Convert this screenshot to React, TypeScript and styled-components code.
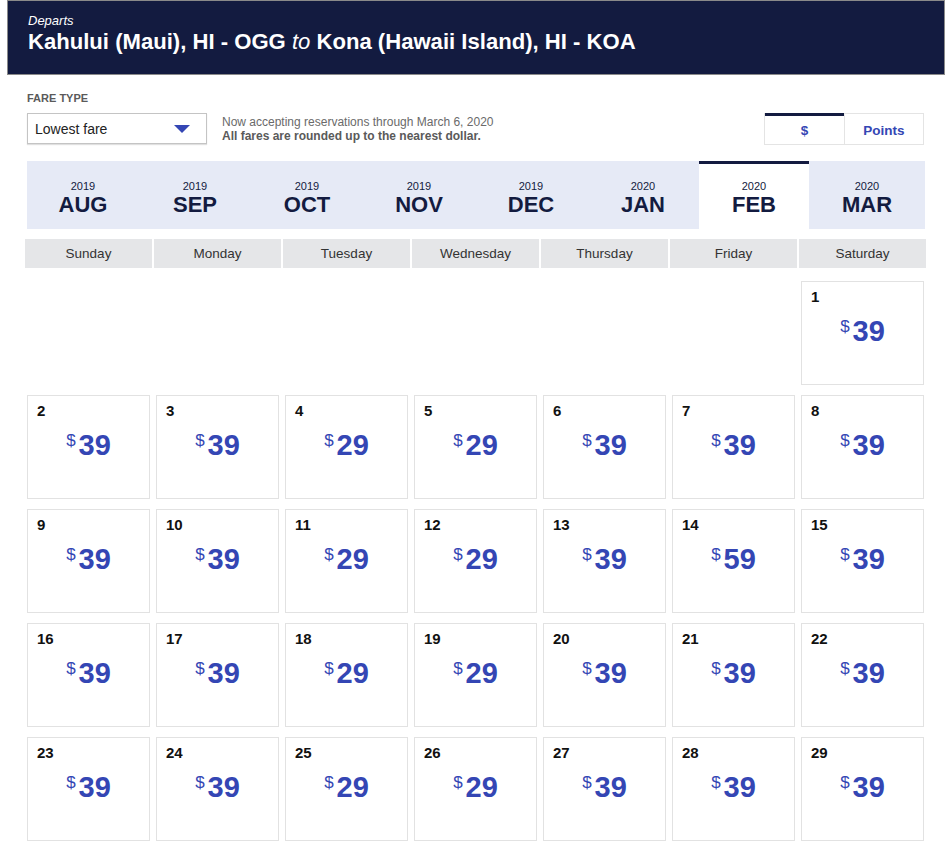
import React from "react";
import styled, { createGlobalStyle } from "styled-components";

const GlobalStyle = createGlobalStyle`
  html, body { margin: 0; padding: 0; background: #ffffff; }
  body { font-family: "Liberation Sans", Arial, sans-serif; color: #222; }
`;

const Page = styled.div`
  width: 948px;
  padding-bottom: 9px;
`;

const Header = styled.header`
  margin-left: 7px;
  width: 938px;
  height: 75px;
  box-sizing: border-box;
  background: #131b40;
  border: 1px solid #8a8a8a;
  padding: 12px 0 0 20px;
  color: #ffffff;
`;

const Departs = styled.div`
  font-size: 13px;
  font-style: italic;
  line-height: 16px;
`;

const Route = styled.h1`
  margin: 0;
  font-size: 22.1px;
  font-weight: 700;
  line-height: 26px;
  em { font-weight: 400; font-style: italic; }
`;

const Main = styled.main`
  margin-left: 25px;
  width: 901px;
`;

const Controls = styled.div`
  display: flex;
  align-items: flex-end;
  padding: 0 2px;
  margin-top: 16px;
`;

const FareGroup = styled.div`
  display: flex;
  flex-direction: column;
`;

const Label = styled.div`
  font-size: 11px;
  font-weight: 700;
  color: #5a5a5a;
  line-height: 14px;
  height: 14px;
  margin-bottom: 8px;
`;

const Select = styled.div`
  width: 180px;
  height: 31px;
  box-sizing: border-box;
  border: 1px solid #c4c4c4;
  box-shadow: 0 1px 1px rgba(0, 0, 0, 0.12);
  display: flex;
  align-items: center;
  justify-content: space-between;
  padding: 0 16px 0 7px;
  font-size: 14px;
  color: #222;
`;

const Caret = styled.span`
  width: 0;
  height: 0;
  border-left: 8px solid transparent;
  border-right: 8px solid transparent;
  border-top: 8px solid #3446b4;
  margin-top: 1px;
`;

const Notice = styled.div`
  margin-left: 15px;
  font-size: 12px;
  line-height: 14px;
  color: #6a6a6a;
  align-self: flex-end;
  margin-bottom: 1px;
  b { color: #5a5a5a; }
`;

const Toggle = styled.div`
  margin-left: auto;
  display: flex;
  border: 1px solid #e4e4e4;
  margin-bottom: -1px;
`;

const ToggleBtn = styled.div<{ $active?: boolean }>`
  width: 79px;
  height: 31px;
  box-sizing: border-box;
  display: flex;
  align-items: center;
  justify-content: center;
  font-size: 13.5px;
  font-weight: 700;
  color: #3446b4;
  border-top: 3px solid ${(p) => (p.$active ? "#131b40" : "transparent")};
  margin-top: -1px;
  & + & { border-left: 1px solid #e4e4e4; }
`;

const Tabs = styled.nav`
  margin-top: 17px;
  margin-left: 2px;
  width: 898px;
  display: grid;
  grid-template-columns: repeat(6, 112fr) 110fr 116fr;
  background: #e6eaf6;
`;

const Tab = styled.div<{ $active?: boolean }>`
  height: 68px;
  box-sizing: border-box;
  display: flex;
  flex-direction: column;
  align-items: center;
  justify-content: center;
  padding-top: 3px;
  color: #131b40;
  background: ${(p) => (p.$active ? "#ffffff" : "transparent")};
  border-top: 3px solid ${(p) => (p.$active ? "#131b40" : "transparent")};
`;

const Year = styled.span`
  font-size: 11px;
  line-height: 13px;
`;

const Month = styled.span`
  font-size: 22px;
  font-weight: 700;
  line-height: 24px;
`;

const WeekRow = styled.div`
  margin-top: 10px;
  display: grid;
  grid-template-columns: repeat(7, 127px);
  column-gap: 2px;
`;

const DayName = styled.div`
  height: 29px;
  background: #e5e6e8;
  display: flex;
  align-items: center;
  justify-content: center;
  font-size: 13.5px;
  color: #333;
`;

const Grid = styled.div`
  margin-top: 13px;
  display: grid;
  grid-template-columns: repeat(7, 127px);
  column-gap: 2px;
  row-gap: 10px;
`;

const Cell = styled.div`
  margin: 0 2px;
  height: 104px;
  box-sizing: border-box;
  border: 1px solid #e2e2e2;
  padding: 7px 9px;
  display: flex;
  flex-direction: column;
`;

const Empty = styled.div``;

const DayNum = styled.div`
  font-size: 15px;
  font-weight: 700;
  color: #111;
  line-height: 16px;
`;

const Price = styled.div`
  margin-top: 10px;
  display: flex;
  justify-content: center;
  align-items: flex-start;
  color: #3446b4;
`;

const Currency = styled.span`
  font-size: 17px;
  line-height: 18px;
  margin-top: 3px;
  margin-right: 3px;
`;

const Amount = styled.span`
  font-size: 29px;
  font-weight: 700;
  line-height: 32px;
`;

const months = [
  ["2019", "AUG"],
  ["2019", "SEP"],
  ["2019", "OCT"],
  ["2019", "NOV"],
  ["2019", "DEC"],
  ["2020", "JAN"],
  ["2020", "FEB"],
  ["2020", "MAR"],
];

const days = ["Sunday", "Monday", "Tuesday", "Wednesday", "Thursday", "Friday", "Saturday"];

const fares: Record<number, number> = {};
for (let d = 1; d <= 29; d++) {
  const dow = (d + 5) % 7; // Feb 1 2020 = Saturday (6)
  fares[d] = dow === 2 || dow === 3 ? 29 : 39;
}
fares[14] = 59;

export default function App() {
  const cells: React.ReactNode[] = [];
  for (let i = 0; i < 6; i++) cells.push(<Empty key={`e${i}`} />);
  for (let d = 1; d <= 29; d++) {
    cells.push(
      <Cell key={d}>
        <DayNum>{d}</DayNum>
        <Price>
          <Currency>$</Currency>
          <Amount>{fares[d]}</Amount>
        </Price>
      </Cell>
    );
  }
  return (
    <Page>
      <GlobalStyle />
      <Header>
        <Departs>Departs</Departs>
        <Route>
          Kahului (Maui), HI - OGG <em>to</em> Kona (Hawaii Island), HI - KOA
        </Route>
      </Header>
      <Main>
        <Controls>
          <FareGroup>
            <Label>FARE TYPE</Label>
            <Select>
              <span>Lowest fare</span>
              <Caret />
            </Select>
          </FareGroup>
          <Notice>
            Now accepting reservations through March 6, 2020
            <br />
            <b>All fares are rounded up to the nearest dollar.</b>
          </Notice>
          <Toggle>
            <ToggleBtn $active>$</ToggleBtn>
            <ToggleBtn>Points</ToggleBtn>
          </Toggle>
        </Controls>
        <Tabs>
          {months.map(([y, m]) => (
            <Tab key={m} $active={m === "FEB"}>
              <Year>{y}</Year>
              <Month>{m}</Month>
            </Tab>
          ))}
        </Tabs>
        <WeekRow>
          {days.map((d) => (
            <DayName key={d}>{d}</DayName>
          ))}
        </WeekRow>
        <Grid>{cells}</Grid>
      </Main>
    </Page>
  );
}
